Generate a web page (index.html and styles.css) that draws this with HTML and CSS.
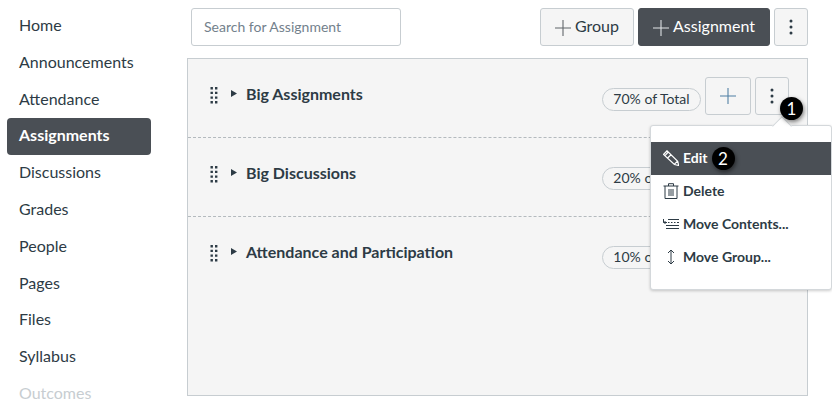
FILE: index.html
```html
<!DOCTYPE html>
<html lang="en">
<head>
<meta charset="utf-8">
<title>Assignments</title>
<link rel="stylesheet" href="styles.css">
</head>
<body>
<div class="page">
  <nav class="sidebar">
    <a class="nav-item">Home</a>
    <a class="nav-item">Announcements</a>
    <a class="nav-item">Attendance</a>
    <a class="nav-item active">Assignments</a>
    <a class="nav-item">Discussions</a>
    <a class="nav-item">Grades</a>
    <a class="nav-item">People</a>
    <a class="nav-item">Pages</a>
    <a class="nav-item">Files</a>
    <a class="nav-item">Syllabus</a>
    <a class="nav-item muted">Outcomes</a>
  </nav>
  <main class="main">
    <div class="toolbar">
      <div class="search">Search for Assignment</div>
      <div class="spacer"></div>
      <button class="btn labeled"><svg class="plus" viewBox="0 0 18 18"><path d="M0 9h18M9 0v18"/></svg>Group</button>
      <button class="btn labeled primary"><svg class="plus" viewBox="0 0 18 18"><path d="M0 9h18M9 0v18"/></svg>Assignment</button>
      <button class="btn kebab"><svg class="dots" viewBox="0 0 4 16"><circle cx="2" cy="2" r="1.5"/><circle cx="2" cy="8" r="1.5"/><circle cx="2" cy="14" r="1.5"/></svg></button>
    </div>
    <section class="panel">
      <div class="row">
        <svg class="handle" viewBox="0 0 8 18"><path d="M0.500 1h2.400v2.400H0.500zM5 1h2.400v2.400H5zM0.500 5.700h2.400v2.400H0.500zM5 5.700h2.400v2.400H5zM0.500 10.400h2.400v2.400H0.500zM5 10.400h2.400v2.400H5zM0.500 15h2.400v2.400H0.500zM5 15h2.400v2.400H5z"/></svg>
        <svg class="caret" viewBox="0 0 6 7"><path d="M0 0l6 3.500-6 3.500z"/></svg>
        <h2 class="title">Big Assignments</h2>
        <div class="spacer"></div>
        <span class="pill">70% of Total</span>
        <button class="btn add"><svg class="plus blue" viewBox="0 0 18 18"><path d="M0 9h18M9 0v18"/></svg></button>
        <button class="btn kebab"><svg class="dots" viewBox="0 0 4 16"><circle cx="2" cy="2" r="1.5"/><circle cx="2" cy="8" r="1.5"/><circle cx="2" cy="14" r="1.5"/></svg></button>
      </div>
      <div class="row">
        <svg class="handle" viewBox="0 0 8 18"><path d="M0.500 1h2.400v2.400H0.500zM5 1h2.400v2.400H5zM0.500 5.700h2.400v2.400H0.500zM5 5.700h2.400v2.400H5zM0.500 10.400h2.400v2.400H0.500zM5 10.400h2.400v2.400H5zM0.500 15h2.400v2.400H0.500zM5 15h2.400v2.400H5z"/></svg>
        <svg class="caret" viewBox="0 0 6 7"><path d="M0 0l6 3.500-6 3.500z"/></svg>
        <h2 class="title">Big Discussions</h2>
        <div class="spacer"></div>
        <span class="pill">20% of Total</span>
        <button class="btn add"><svg class="plus blue" viewBox="0 0 18 18"><path d="M0 9h18M9 0v18"/></svg></button>
        <button class="btn kebab"><svg class="dots" viewBox="0 0 4 16"><circle cx="2" cy="2" r="1.5"/><circle cx="2" cy="8" r="1.5"/><circle cx="2" cy="14" r="1.5"/></svg></button>
      </div>
      <div class="row last">
        <svg class="handle" viewBox="0 0 8 18"><path d="M0.500 1h2.400v2.400H0.500zM5 1h2.400v2.400H5zM0.500 5.700h2.400v2.400H0.500zM5 5.700h2.400v2.400H5zM0.500 10.400h2.400v2.400H0.500zM5 10.400h2.400v2.400H5zM0.500 15h2.400v2.400H0.500zM5 15h2.400v2.400H5z"/></svg>
        <svg class="caret" viewBox="0 0 6 7"><path d="M0 0l6 3.500-6 3.500z"/></svg>
        <h2 class="title">Attendance and Participation</h2>
        <div class="spacer"></div>
        <span class="pill">10% of Total</span>
        <button class="btn add"><svg class="plus blue" viewBox="0 0 18 18"><path d="M0 9h18M9 0v18"/></svg></button>
        <button class="btn kebab"><svg class="dots" viewBox="0 0 4 16"><circle cx="2" cy="2" r="1.5"/><circle cx="2" cy="8" r="1.5"/><circle cx="2" cy="14" r="1.5"/></svg></button>
      </div>
    </section>
  </main>
  <div class="menu">
    <div class="menu-arrow"></div>
    <ul class="menu-list">
      <li class="menu-item selected">
        <svg class="micon" viewBox="0 0 16 16"><path d="M0.500 4.500L4 0.800l10.700 10.400 1 4.300-4.300-1zM1.800 5.800L5.200 2M4.300 8.300L8 4.700M11.500 14.200l3-3"/></svg>Edit
        <span class="callout inline">2</span>
      </li>
      <li class="menu-item">
        <svg class="micon" viewBox="0 0 16 16"><path d="M0.500 3h15M5.500 3V0.700h5V3M2 3V15.500h12V3M6 6v7M8 6v7M10 6v7"/></svg>Delete
      </li>
      <li class="menu-item">
        <svg class="micon" viewBox="0 0 16 16"><path d="M0.500 3v3.500h3.500M2.500 5l-1.500 1.500L2.500 8M5 3.500h11M5 6.500h1.500M8 6.500h1.500M11 6.500h1.500M14 6.500h2M3 9.500h13M3 12.500h13"/></svg>Move Contents...
      </li>
      <li class="menu-item">
        <svg class="micon" viewBox="0 0 16 16"><path d="M8 1v14M5 4l3-3 3 3M5 12l3 3 3-3"/></svg>Move Group...
      </li>
    </ul>
  </div>
  <span class="callout float">1</span>
</div>
</body>
</html>
```
FILE: styles.css
```css
* { box-sizing: border-box; }
html, body { margin: 0; padding: 0; background: #fff; }
body { width: 832px; height: 406px; overflow: hidden; font-family: Lato, "Open Sans", sans-serif; color: #2d3b45; }
.page { position: relative; display: flex; width: 832px; height: 406px; overflow: hidden; }
.sidebar { width: 187px; flex: none; padding: 7.6px 36px 0 7px; display: flex; flex-direction: column; }
.nav-item { display: flex; align-items: center; flex: none; height: 36.75px; padding: 0 0 2px 12px; font-size: 16px; color: #2d3b45; border-radius: 4px; }
.nav-item.active { height: 37px; margin-bottom: -0.25px; padding-bottom: 3px; background: #4a4f55; color: #fff; font-weight: 700; }
.nav-item.muted { color: #c7cdd1; }
.main { width: 621px; flex: none; padding-top: 8px; }
.toolbar { display: flex; height: 38px; gap: 4px; margin-left: 4px; margin-bottom: 12px; }
.search { width: 210px; height: 38px; border: 1px solid #c7cdd1; border-radius: 3px; padding-left: 12px; font-size: 14px; line-height: 36px; color: #73818c; background: #fff; }
.spacer { flex: 1; }
.btn { display: inline-flex; align-items: center; justify-content: center; height: 38px; border: 1px solid #c7cdd1; border-radius: 3px; background: #f5f5f5; color: #2d3b45; font: 16px Lato, sans-serif; padding: 0; flex: none; }
.btn.labeled { width: 94px; padding-bottom: 3px; }
.btn.labeled.primary { width: 132px; background: #4a4f55; border-color: #4a4f55; color: #fff; }
.btn.kebab { width: 34px; }
.btn.add { width: 46px; margin-right: 4px; }
.plus { width: 16px; height: 16px; margin: 5px 4px 0 0; fill: none; stroke: #5f6468; stroke-width: 1.2; }
.primary .plus { stroke: #e2e5e8; }
.plus.blue { margin: 0; stroke: #4f7fa3; }
.dots { width: 4px; height: 16px; fill: #2d3b45; }
.panel { width: 621px; height: 338px; border: 1px solid #c7cdd1; background: #f5f5f5; }
.row { display: flex; align-items: flex-start; height: 79px; padding: 18px 18px 0 22px; border-bottom: 1px dashed #b4babe; }
.row.last { border-bottom: 0; }
.handle { width: 8px; height: 18px; margin-top: 9px; margin-right: 13px; fill: #2d3b45; flex: none; }
.caret { width: 6px; height: 7px; margin-top: 13px; margin-right: 9px; fill: #2d3b45; flex: none; }
.title { margin: 7px 0 0; font-size: 16px; line-height: 20px; font-weight: 700; color: #2d3b45; }
.pill { display: flex; align-items: center; justify-content: center; width: 99px; height: 23px; margin-top: 11px; margin-right: 4px; padding-bottom: 2px; border: 1px solid #c7cdd1; border-radius: 12px; font-size: 14px; color: #2d3b45; background: #f5f5f5; }
.menu { position: absolute; left: 650px; top: 125px; width: 182px; height: 165px; background: #fff; border: 1px solid #d4d8db; border-radius: 3px; box-shadow: 0 1px 3px rgba(0,0,0,.2); }
.menu-arrow { position: absolute; left: 124px; top: -7px; width: 14px; height: 14px; background: #fff; border-top: 1px solid #d4d8db; border-left: 1px solid #d4d8db; transform: rotate(45deg); }
.menu-list { position: relative; list-style: none; margin: 0; padding: 16px 0 0; }
.menu-item { display: flex; align-items: center; height: 33px; padding: 0 0 2px 12px; font-size: 14px; font-weight: 700; color: #2d3b45; }
.menu-item.selected { background: #4a4f55; color: #fff; }
.micon { width: 16px; height: 16px; margin-right: 4px; fill: none; stroke: #2d3b45; stroke-width: 1; flex: none; }
.selected .micon { stroke: #fff; stroke-width: 1.2; }
.callout { display: flex; align-items: center; justify-content: center; width: 23px; height: 23px; border-radius: 50%; background: #000; color: #fff; font-size: 17px; font-weight: 400; box-shadow: 1px 2px 4px rgba(0,0,0,.5); }
.callout.inline { margin: 2px 0 0 4px; }
.callout.float { position: absolute; left: 780px; top: 97px; }
```
